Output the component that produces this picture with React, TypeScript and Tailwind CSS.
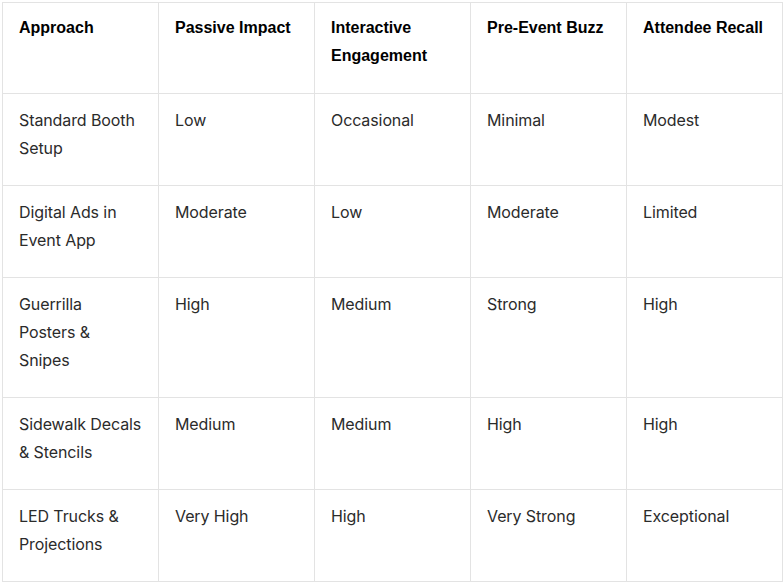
const headers = ['Approach', 'Passive Impact', 'Interactive Engagement', 'Pre-Event Buzz', 'Attendee Recall'];

const rows = [
  ['Standard Booth Setup', 'Low', 'Occasional', 'Minimal', 'Modest'],
  ['Digital Ads in Event App', 'Moderate', 'Low', 'Moderate', 'Limited'],
  ['Guerrilla Posters & Snipes', 'High', 'Medium', 'Strong', 'High'],
  ['Sidewalk Decals & Stencils', 'Medium', 'Medium', 'High', 'High'],
  ['LED Trucks & Projections', 'Very High', 'High', 'Very Strong', 'Exceptional'],
];

export default function App() {
  return (
    <div className="min-h-screen bg-white pl-[2px] pt-[2px]">
      <table className="w-[781px] table-fixed border-collapse text-left">
        <thead>
          <tr>
            {headers.map((h) => (
              <th
                key={h}
                className="border border-[#e3e3e3] px-4 pt-[11px] pb-[23px] align-top font-['Liberation_Sans',Arial,sans-serif] text-[16px] font-bold leading-[28px] text-black"
              >
                {h}
              </th>
            ))}
          </tr>
        </thead>
        <tbody>
          {rows.map((row) => (
            <tr key={row[0]}>
              {row.map((cell, i) => (
                <td
                  key={i}
                  className="border border-[#e3e3e3] px-4 pt-[12px] pb-[23px] align-top font-['Inter',sans-serif] text-[16px] leading-[28px] tracking-[-0.1px] text-[#2b2b2b]"
                >
                  {cell}
                </td>
              ))}
            </tr>
          ))}
        </tbody>
      </table>
    </div>
  );
}
